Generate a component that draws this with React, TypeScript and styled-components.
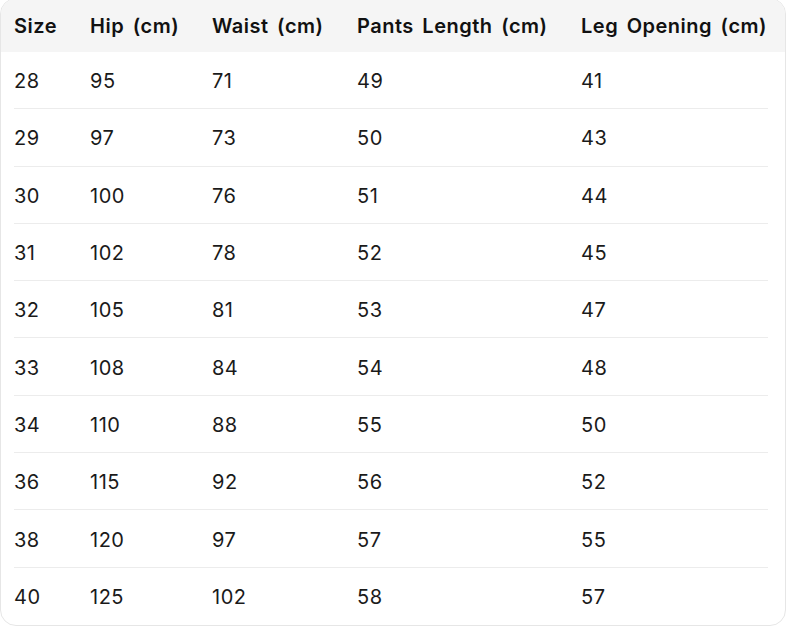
import React from 'react';
import styled, { createGlobalStyle } from 'styled-components';

const GlobalStyle = createGlobalStyle`
  html, body {
    margin: 0;
    padding: 0;
    background: #ffffff;
  }
  body {
    font-family: Inter, "Noto Sans", "Liberation Sans", sans-serif;
    color: #171717;
  }
`;

const Card = styled.div`
  width: 786px;
  margin-top: -2px;
  box-sizing: border-box;
  border: 1px solid #e6e6e6;
  border-radius: 16px;
  overflow: hidden;
  background: #fff;
`;

const Grid = styled.div`
  display: grid;
  grid-template-columns: 76px 122px 145px 224px 1fr;
  align-items: center;
`;

const HeadRow = styled(Grid)`
  background: #f5f5f5;
  height: 53px;
  padding: 0 14px 0 13px;
`;

const HeadCell = styled.div`
  font-size: 20px;
  font-weight: 600;
  letter-spacing: 0.5px;
  word-spacing: 3px;
  color: #111;
  white-space: nowrap;
`;

const Body = styled.div`
  padding: 0 17px 0 13px;
`;

const Row = styled(Grid)<{ $last?: boolean }>`
  box-sizing: border-box;
  height: 57.3px;
  padding-top: 2px;
  border-bottom: ${p => (p.$last ? 'none' : '1px solid #ececec')};
`;

const Cell = styled.div`
  font-size: 20px;
  font-weight: 400;
  letter-spacing: 0.5px;
  color: #1a1a1a;
`;

const headers = ['Size', 'Hip (cm)', 'Waist (cm)', 'Pants Length (cm)', 'Leg Opening (cm)'];

const rows = [
  [28, 95, 71, 49, 41],
  [29, 97, 73, 50, 43],
  [30, 100, 76, 51, 44],
  [31, 102, 78, 52, 45],
  [32, 105, 81, 53, 47],
  [33, 108, 84, 54, 48],
  [34, 110, 88, 55, 50],
  [36, 115, 92, 56, 52],
  [38, 120, 97, 57, 55],
  [40, 125, 102, 58, 57],
];

const App: React.FC = () => {
  return (
    <>
      <GlobalStyle />
      <Card>
        <HeadRow>
          {headers.map(h => (
            <HeadCell key={h}>{h}</HeadCell>
          ))}
        </HeadRow>
        <Body>
          {rows.map((r, i) => (
            <Row key={r[0]} $last={i === rows.length - 1}>
              {r.map((v, j) => (
                <Cell key={j}>{v}</Cell>
              ))}
            </Row>
          ))}
        </Body>
      </Card>
    </>
  );
};

export default App;
